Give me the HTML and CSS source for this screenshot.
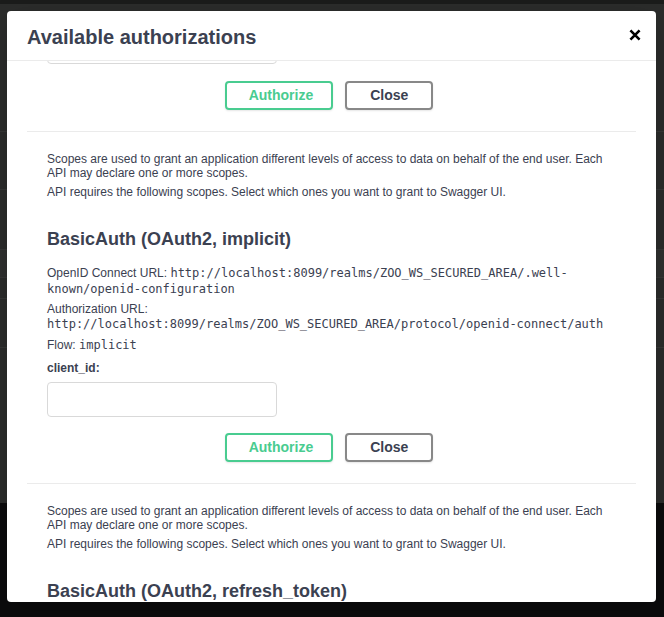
FILE: index.html
```html
<!DOCTYPE html>
<html lang="en">
<head>
<meta charset="utf-8">
<title>Available authorizations</title>
<link rel="stylesheet" href="styles.css">
</head>
<body>
<div class="page">
  <div class="page-topline"></div>
  <div class="page-row row-a"></div>
  <div class="page-row row-b"></div>
  <div class="page-row row-c"></div>
  <div class="page-row row-d"></div>
  <div class="page-row row-e"></div>
  <div class="page-row row-f"></div>
  <div class="page-row row-g"></div>
  <div class="page-footer"></div>
</div>

<div class="modal" role="dialog" aria-label="Available authorizations">
  <div class="modal-header">
    <h3 class="modal-title">Available authorizations</h3>
    <button class="modal-close" type="button" aria-label="Close">
      <svg width="12" height="12" viewBox="0 0 12 12" aria-hidden="true">
        <path d="M1.4 1.4 L10.6 10.6 M10.6 1.4 L1.4 10.6" stroke="#000" stroke-width="2.6" fill="none"/>
      </svg>
    </button>
  </div>
  <div class="modal-body">
    <div class="auth-container tail">
      <input class="auth-input" type="text" aria-label="client_id">
      <div class="auth-btn-wrapper">
        <button class="btn authorize" type="button">Authorize</button>
        <button class="btn close" type="button">Close</button>
      </div>
    </div>

    <div class="auth-container">
      <p class="auth-text">Scopes are used to grant an application different levels of access to data on behalf of the end user. Each API may declare one or more scopes.</p>
      <p class="auth-text">API requires the following scopes. Select which ones you want to grant to Swagger UI.</p>
      <h4 class="auth-title">BasicAuth (OAuth2, implicit)</h4>
      <p class="auth-text">OpenID Connect URL: <code class="auth-code">http://localhost:8099/realms/ZOO_WS_SECURED_AREA/.well-known/openid-configuration</code></p>
      <p class="auth-text">Authorization URL: <code class="auth-code">http://localhost:8099/realms/ZOO_WS_SECURED_AREA/protocol/openid-connect/auth</code></p>
      <p class="auth-text">Flow: <code class="auth-code">implicit</code></p>
      <label class="auth-label" for="cid">client_id:</label>
      <input class="auth-input" id="cid" type="text">
      <div class="auth-btn-wrapper">
        <button class="btn authorize" type="button">Authorize</button>
        <button class="btn close" type="button">Close</button>
      </div>
    </div>

    <div class="auth-container">
      <p class="auth-text">Scopes are used to grant an application different levels of access to data on behalf of the end user. Each API may declare one or more scopes.</p>
      <p class="auth-text">API requires the following scopes. Select which ones you want to grant to Swagger UI.</p>
      <h4 class="auth-title">BasicAuth (OAuth2, refresh_token)</h4>
    </div>
  </div>
</div>
</body>
</html>
```
FILE: styles.css
```css
html, body {
  margin: 0;
  padding: 0;
}

body {
  width: 664px;
  height: 617px;
  overflow: hidden;
  background: #0b0b0c;
  font-family: "Liberation Sans", Arial, sans-serif;
  color: #3b4151;
}

/* dimmed page behind the dialog */
.page {
  height: 617px;
  display: flex;
  flex-direction: column;
}

.page-topline {
  height: 4px;
  background: #1b1c1b;
}

.page-row {
  background: #2b2c2b;
  border-bottom: 1px solid #363736;
}

.row-a { height: 127px; }
.row-b { height: 57px; }
.row-c { height: 59px; }
.row-d { height: 27px; background: #2f302f; }
.row-e { height: 20px; }
.row-f { height: 48px; }
.row-g { height: 155px; border-bottom: 0; }

.page-footer {
  flex: 1;
  background: #0b0b0c;
}

/* dialog */
.modal {
  position: absolute;
  top: 11px;
  left: 7px;
  width: 649px;
  height: 591px;
  background: #fff;
  border-radius: 4px;
  box-shadow: 0 10px 30px -2px rgba(0, 0, 0, 0.2);
  display: flex;
  flex-direction: column;
  overflow: hidden;
}

.modal-header {
  flex: none;
  box-sizing: border-box;
  height: 50px;
  padding: 2px 15px 0 20px;
  border-bottom: 1px solid #ebebeb;
  display: flex;
  align-items: center;
  justify-content: space-between;
}

.modal-title {
  margin: 0;
  font-size: 20px;
  line-height: 24px;
  font-weight: 700;
  color: #3b4151;
}

.modal-close {
  border: 0;
  background: none;
  padding: 0;
  margin: 0 0 4px;
  width: 12px;
  height: 12px;
  display: flex;
  cursor: pointer;
}

.modal-body {
  flex: 1;
  min-height: 0;
  overflow: hidden;
  padding: 0 20px;
}

.auth-container {
  padding: 20px 20px 10px;
  border-bottom: 1px solid #ebebeb;
}

.auth-container.tail {
  padding-top: 0;
}

.auth-text {
  margin: 0 0 5px;
  font-size: 12px;
  line-height: 14px;
  color: #3b4151;
}

.auth-title {
  margin: 30px 0 15px;
  font-size: 18px;
  line-height: 21px;
  font-weight: 700;
  color: #3b4151;
}

.auth-code {
  font-family: "DejaVu Sans Mono", "Liberation Mono", monospace;
  font-size: 12px;
  line-height: 16px;
  color: #3b4151;
}

.auth-label {
  display: block;
  margin: 8px 0 0;
  font-size: 12px;
  line-height: 14px;
  font-weight: 700;
  color: #3b4151;
}

.auth-input {
  display: block;
  box-sizing: border-box;
  width: 230px;
  height: 35px;
  margin: 7px 0 5px;
  padding: 8px 10px;
  border: 1px solid #d9d9d9;
  border-radius: 4px;
  background: #fff;
  font: 13px "Liberation Sans", Arial, sans-serif;
  outline: none;
}

.tail .auth-input {
  margin-top: -32px;
  margin-bottom: 6px;
}

.auth-btn-wrapper {
  display: flex;
  justify-content: center;
  gap: 12px;
  padding: 11px 30px 11px 25px;
}

.btn {
  font: 700 14px/15px "Liberation Sans", Arial, sans-serif;
  padding: 5px 23px;
  border: 2px solid #888;
  border-radius: 4px;
  background: transparent;
  box-shadow: 0 1px 2px rgba(0, 0, 0, 0.1);
  color: #3b4151;
  cursor: pointer;
}

.btn.authorize {
  color: #49cc90;
  border-color: #49cc90;
  padding-left: 22px;
  padding-right: 18px;
}
```
